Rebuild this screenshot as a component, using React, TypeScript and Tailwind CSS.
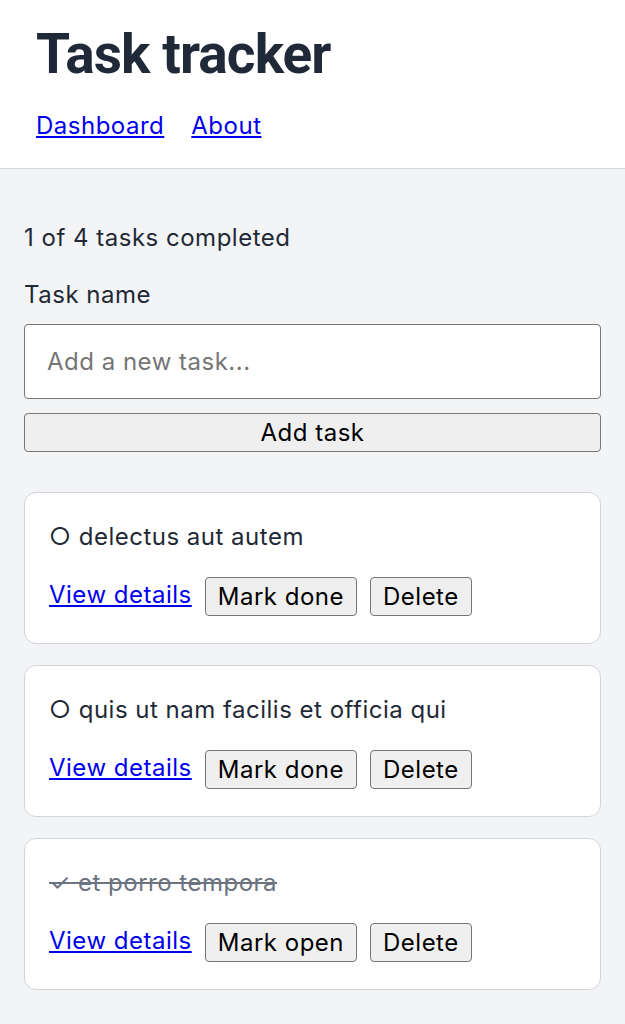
import { useState } from 'react'

type Task = { id: number; title: string; completed: boolean }

const initialTasks: Task[] = [
  { id: 1, title: 'delectus aut autem', completed: false },
  { id: 2, title: 'quis ut nam facilis et officia qui', completed: false },
  { id: 3, title: 'et porro tempora', completed: true },
]

export default function App() {
  const [tasks, setTasks] = useState<Task[]>(initialTasks)
  const [name, setName] = useState('')

  const done = tasks.filter(t => t.completed).length

  function addTask(e: React.FormEvent) {
    e.preventDefault()
    if (!name.trim()) return
    setTasks([...tasks, { id: Date.now(), title: name.trim(), completed: false }])
    setName('')
  }

  return (
    <div className="min-h-screen bg-[#f3f4f6] font-['Inter','Roboto',sans-serif] text-[24px] leading-[36px] tracking-[0.5px] text-[#1f2937]">
      <header className="bg-white border-b-[1.5px] border-[#d1d5db] px-[36px] pt-[24px] pb-[24px]">
        <h1 className="font-['Roboto',sans-serif] text-[55px] leading-[60px] font-bold tracking-[-0.9px]">Task tracker</h1>
        <nav className="mt-[24px] flex gap-[27px]">
          <a href="#" className="text-[#0000ee] underline">Dashboard</a>
          <a href="#" className="text-[#0000ee] underline">About</a>
        </nav>
      </header>

      <main className="px-[24px] pt-[51px] pb-[24px]">
        <p>{done} of {tasks.length + 1} tasks completed</p>

        <form onSubmit={addTask} className="mt-[21px]">
          <label htmlFor="task-name" className="block">Task name</label>
          <input
            id="task-name"
            value={name}
            onChange={e => setName(e.target.value)}
            placeholder="Add a new task..."
            className="mt-[11px] block w-full h-[75px] px-[22px] bg-white border-[1.5px] border-[#767676] rounded-[4px] placeholder:text-[#757575] text-black outline-none"
          />
          <button type="submit" className="mt-[14px] block w-full h-[39px] bg-[#efefef] border-[1.5px] border-[#767676] rounded-[4px] text-black">
            Add task
          </button>
        </form>

        <ul className="mt-[40px] flex flex-col gap-[21px]">
          {tasks.map(task => (
            <li key={task.id} className="bg-white border-[1.5px] border-[#d1d5db] rounded-[12px] px-[24px] pt-[26px] pb-[27px]">
              <p className={task.completed ? 'line-through text-[#6b7280]' : ''}>
                {task.completed ? '✓' : '○'} {task.title}
              </p>
              <div className="mt-[22px] flex items-start gap-[13px]">
                <a href="#" className="text-[#0000ee] underline">View details</a>
                <button
                  onClick={() => setTasks(tasks.map(t => (t.id === task.id ? { ...t, completed: !t.completed } : t)))}
                  className="h-[39px] px-[12px] bg-[#efefef] border-[1.5px] border-[#767676] rounded-[4px] text-black"
                >
                  {task.completed ? 'Mark open' : 'Mark done'}
                </button>
                <button
                  onClick={() => setTasks(tasks.filter(t => t.id !== task.id))}
                  className="h-[39px] px-[12px] bg-[#efefef] border-[1.5px] border-[#767676] rounded-[4px] text-black"
                >
                  Delete
                </button>
              </div>
            </li>
          ))}
        </ul>
      </main>
    </div>
  )
}
